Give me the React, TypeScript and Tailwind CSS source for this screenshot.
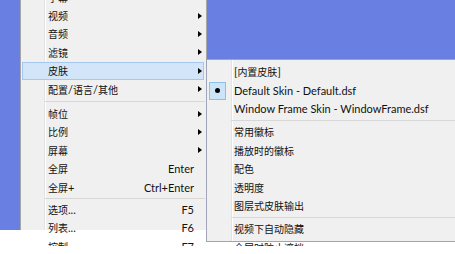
import React from 'react'

type Item =
  | { kind: 'sep'; h: string }
  | { kind: 'item'; label: string; shortcut?: string; arrow?: boolean; active?: boolean; checked?: boolean }

const mainItems: Item[] = [
  { kind: 'item', label: '字幕', arrow: true },
  { kind: 'item', label: '视频', arrow: true },
  { kind: 'item', label: '音频', arrow: true },
  { kind: 'item', label: '滤镜', arrow: true },
  { kind: 'item', label: '皮肤', arrow: true, active: true },
  { kind: 'item', label: '配置/语言/其他', arrow: true },
  { kind: 'sep', h: 'h-[6px]' },
  { kind: 'item', label: '帧位', arrow: true },
  { kind: 'item', label: '比例', arrow: true },
  { kind: 'item', label: '屏幕', arrow: true },
  { kind: 'item', label: '全屏', shortcut: 'Enter' },
  { kind: 'item', label: '全屏+', shortcut: 'Ctrl+Enter' },
  { kind: 'sep', h: 'h-[4px]' },
  { kind: 'item', label: '选项...', shortcut: 'F5' },
  { kind: 'item', label: '列表...', shortcut: 'F6' },
  { kind: 'item', label: '控制...', shortcut: 'F7' },
]

const skinItems: Item[] = [
  { kind: 'item', label: '[内置皮肤]' },
  { kind: 'item', label: 'Default Skin - Default.dsf', checked: true },
  { kind: 'item', label: 'Window Frame Skin - WindowFrame.dsf' },
  { kind: 'sep', h: 'h-[5px]' },
  { kind: 'item', label: '常用徽标' },
  { kind: 'item', label: '播放时的徽标' },
  { kind: 'item', label: '配色' },
  { kind: 'item', label: '透明度' },
  { kind: 'item', label: '图层式皮肤输出' },
  { kind: 'sep', h: 'h-[5px]' },
  { kind: 'item', label: '视频下自动隐藏' },
  { kind: 'item', label: '全屏时防止遮挡' },
]

// CJK glyphs in the screenshot run a bit smaller than the latin text
function Label({ text }: { text: string }) {
  const parts = text.split(/([\u3000-\u9fff\uff00-\uffef]+)/).filter(Boolean)
  return (
    <>
      {parts.map((p, i) =>
        /[\u3000-\u9fff\uff00-\uffef]/.test(p) ? (
          <span key={i} className="text-[10px]">{p}</span>
        ) : (
          <span key={i}>{p}</span>
        )
      )}
    </>
  )
}

function Arrow() {
  return <span className="block h-0 w-0 border-y-[3.5px] border-l-[4px] border-y-transparent border-l-black" />
}

function Row({ item, sub }: { item: Item; sub?: boolean }) {
  if (item.kind === 'sep') {
    return (
      <div className={`flex items-center pl-[24px] ${item.h}`}>
        <div className="h-px flex-1 bg-[#d7d7d7]" />
      </div>
    )
  }
  return (
    <div
      className={`relative ml-[1px] mr-[1px] flex h-[18.4px] items-center border pl-[25px] ${
        item.active ? 'border-[#a5c9ee] bg-[#d3e5f8]' : 'border-transparent'
      }`}
    >
      {item.checked && (
        <div className="absolute left-[0px] top-0 flex h-[18px] w-[17px] items-center justify-center border border-[#8cc0ea] bg-[#cce4f7]">
          <span className="h-[5px] w-[5px] rounded-full bg-black" />
        </div>
      )}
      <span className="flex-1 whitespace-nowrap">
        <Label text={item.label} />
      </span>
      {!sub && (
        <>
          {item.shortcut && <span className="whitespace-nowrap">{item.shortcut}</span>}
          <span className="flex w-[9px] justify-end pr-[1px]">{item.arrow && <Arrow />}</span>
        </>
      )}
    </div>
  )
}

export default function App() {
  return (
    <div
      className="h-[254px] w-[455px] overflow-hidden bg-white text-[11px] leading-none text-[#111]"
      style={{ fontFamily: 'Lato, "Noto Sans CJK SC", sans-serif' }}
    >
      {/* capture is cut just below the menus */}
      <div className="relative h-[246px] overflow-hidden">
        <div className="h-[242px] bg-[#6a7fe2] pl-[20px]">
          {/* main menu */}
          <div className="relative h-full w-[187px] border-x border-[#a6a6a6] bg-[#f0f0f0]">
            <div className="absolute left-[23px] top-0 h-full w-px bg-[#e2e3e3]" />
            <div className="absolute left-[24px] top-0 h-full w-px bg-white" />
            <div className="relative -mt-[12px] flex flex-col pr-[1px]">
              {mainItems.map((it, i) => (
                <Row key={i} item={it} />
              ))}
            </div>
          </div>
        </div>

        {/* skin submenu */}
        <div className="absolute left-[206px] top-[59px] h-[183px] w-[260px] border border-[#a0a4b8] bg-[#f0f0f0] pt-[2.5px]">
          <div className="absolute left-[24px] top-0 h-full w-px bg-[#e2e3e3]" />
          <div className="absolute left-[25px] top-0 h-full w-px bg-white" />
          <div className="relative flex flex-col">
            {skinItems.map((it, i) => (
              <Row key={i} item={it} sub />
            ))}
          </div>
        </div>
      </div>
    </div>
  )
}
